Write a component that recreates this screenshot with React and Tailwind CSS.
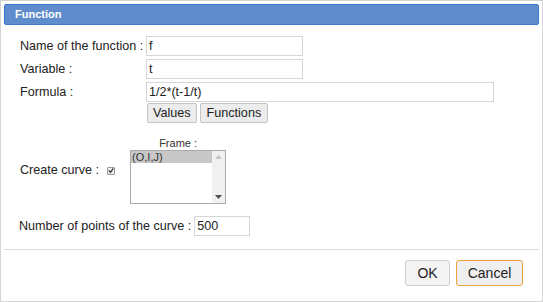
export default function App() {
  const font = { fontFamily: '"Liberation Sans", Arial, sans-serif' };
  return (
    <div style={font} className="w-[543px] h-[302px] bg-white border border-[#d4d4d4] box-border flex flex-col text-[12.6px] text-[#222]">
      <div className="mx-[3px] mt-[3px] h-[21px] rounded-[2px] bg-[#5f8dcc] border border-[#3d78d0] flex items-center pl-[10px]">
        <span className="text-white font-bold text-[11px]">Function</span>
      </div>
      <div className="flex flex-col pl-[19px] pt-[10px]">
        <div className="flex items-center h-[22px]">
          <span className="w-[126px] whitespace-nowrap">Name of the function :</span>
          <div className="w-[157px] h-[20px] border border-[#d6d6d6] flex items-center pl-[2px]">f</div>
        </div>
        <div className="flex items-center h-[22px] mt-[1px]">
          <span className="w-[126px] whitespace-nowrap">Variable :</span>
          <div className="w-[157px] h-[20px] border border-[#d6d6d6] flex items-center pl-[2px]">t</div>
        </div>
        <div className="flex items-center h-[22px] mt-[1px]">
          <span className="w-[126px] whitespace-nowrap">Formula :</span>
          <div className="w-[348px] h-[20px] border border-[#d6d6d6] flex items-center pl-[2px]">1/2*(t-1/t)</div>
        </div>
        <div className="flex items-center gap-[3px] pl-[127px]">
          <div className="h-[20px] px-[5px] border border-[#c4c4c4] bg-[#ececec] rounded-[2px] flex items-center">Values</div>
          <div className="h-[20px] px-[6px] border border-[#c4c4c4] bg-[#ececec] rounded-[2px] flex items-center">Functions</div>
        </div>
        <div className="flex items-center mt-[14px]">
          <span className="whitespace-nowrap">Create curve :</span>
          <div className="ml-[8px] w-[8px] h-[8px] border border-[#999] bg-[#eee] rounded-[1px] flex items-center justify-center">
            <svg width="7" height="7" viewBox="0 0 7 7"><path d="M1 3.5 L3 5.5 L6.2 1" stroke="#333" strokeWidth="1.4" fill="none" /></svg>
          </div>
          <div className="ml-[15px] flex flex-col items-center">
            <span className="text-[11px] text-[#333] leading-[13px]">Frame :</span>
            <div className="w-[96px] h-[54px] border border-[#a9a9a9] flex">
              <div className="flex-1 flex flex-col">
                <div className="bg-[#c8c8c8] text-[11px] text-[#333] leading-[12px] pl-[1px] h-[12px]">(O,I,J)</div>
              </div>
              <div className="w-[13px] bg-[#f1f1f1] flex flex-col justify-between items-center py-[4px]">
                <svg width="7" height="4" viewBox="0 0 7 4"><path d="M0 4 L3.5 0 L7 4Z" fill="#c3c3c3" /></svg>
                <svg width="7" height="4" viewBox="0 0 7 4"><path d="M0 0 L7 0 L3.5 4Z" fill="#505050" /></svg>
              </div>
            </div>
          </div>
        </div>
        <div className="flex items-center mt-[12px] -ml-[1px]">
          <span className="whitespace-nowrap">Number of points of the curve :</span>
          <div className="ml-[3px] w-[56px] h-[20px] border border-[#d6d6d6] flex items-center pl-[2px]">500</div>
        </div>
      </div>
      <div className="mx-[3px] mt-[13px] border-t border-[#dcdcdc]"></div>
      <div className="flex justify-end gap-[6px] pr-[19px] pt-[10px]">
        <div className="w-[45px] h-[26px] border border-[#cfcfcf] bg-[#f4f4f4] rounded-[3px] flex items-center justify-center text-[14px]">OK</div>
        <div className="w-[67px] h-[26px] border border-[#e8a33d] bg-[#efefef] rounded-[3px] flex items-center justify-center text-[14px]">Cancel</div>
      </div>
    </div>
  );
}
